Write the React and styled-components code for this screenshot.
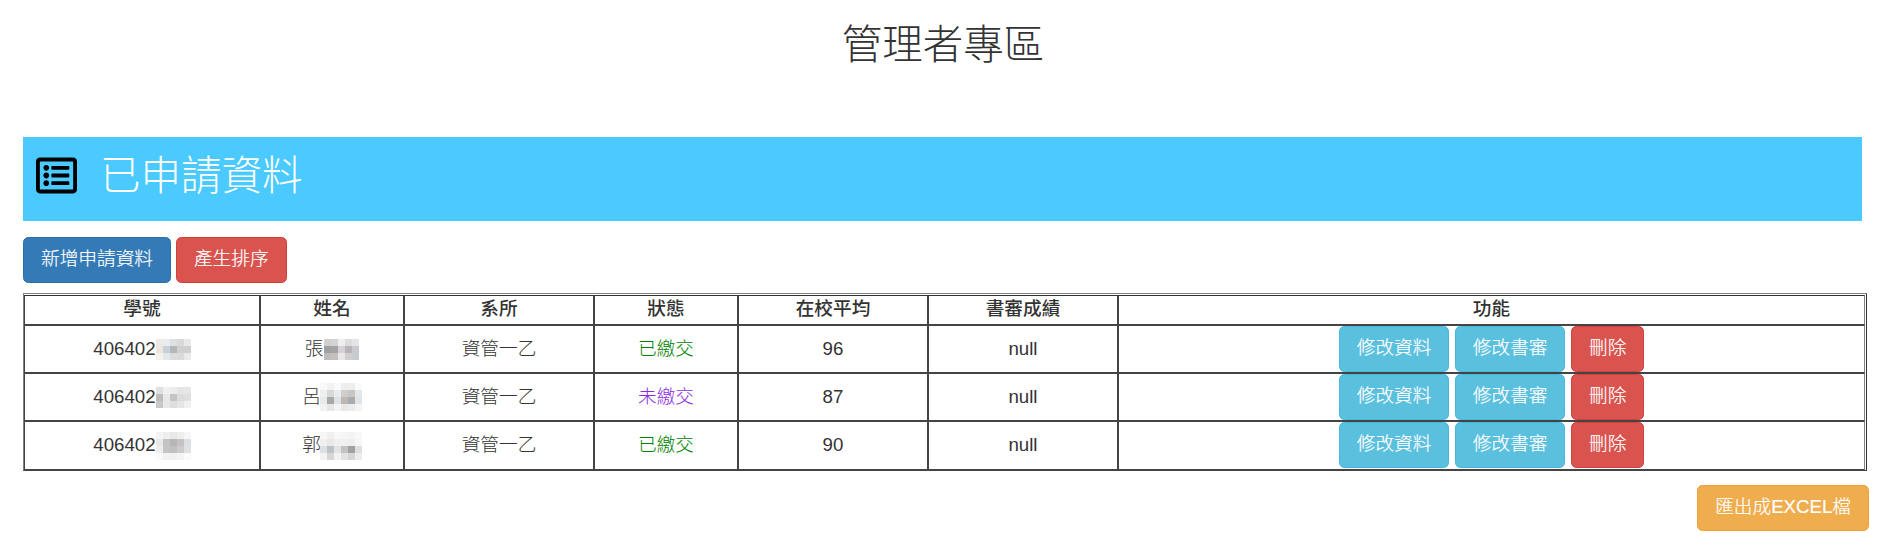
import React from 'react';
import styled, { createGlobalStyle } from 'styled-components';
import { FaRegListAlt } from 'react-icons/fa';

const GlobalStyle = createGlobalStyle`
html, body {
    margin: 0;
    padding: 0;
    background: #fff;
}
body {
    font-family: "Liberation Sans", "Noto Sans CJK TC", sans-serif;
    font-size: 18.67px;
    color: #333;
}
`

const Page = styled.div`
    width: 1886px;
    height: 547px;
    overflow: hidden;
    box-sizing: border-box;
    padding: 0 23px;
`

const Title = styled.h2`
    margin: 0 0 30px;
    height: 107px;
    padding-top: 23px;
    box-sizing: border-box;
    text-align: center;
    font-size: 40.5px;
    line-height: 44px;
    font-weight: 300;
    color: #333;
`

const Banner = styled.div`
    display: flex;
    align-items: center;
    gap: 23px;
    width: 1839px;
    height: 84px;
    box-sizing: border-box;
    padding: 0 0 7px 13px;
    background-color: #4acaff;
    color: #000;
    svg {
        display: block;
    }
`

const BannerTitle = styled.h1`
    margin: 0;
    font-size: 40.5px;
    line-height: 44px;
    font-weight: 300;
    color: #fff;
`

const Toolbar = styled.div`
    display: flex;
    gap: 5px;
    margin: 16px 0 10px;
`

const variants = {
    primary: ['#337ab7', '#2e6da4'],
    danger: ['#d9534f', '#d43f3a'],
    info: ['#5bc0de', '#46b8da'],
    warning: ['#f0ad4e', '#eea236'],
}

const Button = styled.button`
    box-sizing: border-box;
    height: 46px;
    padding: 0 17px 2px;
    font-family: inherit;
    font-size: 18.67px;
    line-height: 28px;
    font-weight: 300;
    -webkit-text-stroke: 0.2px #fff;
    white-space: nowrap;
    color: #fff;
    cursor: pointer;
    border-radius: 5.33px;
    border: 1px solid ${({ $variant }) => variants[$variant][1]};
    background-color: ${({ $variant }) => variants[$variant][0]};
`

// outer frame is a light line, a white gap, then the dark cell lines
const Table = styled.table`
    width: 1843px;
    table-layout: fixed;
    border-collapse: separate;
    border-spacing: 0;
    box-sizing: border-box;
    padding: 1px 1px 0 0;
    border-style: solid;
    border-width: 1px;
    border-color: #808080 #333 #444 #808080;
    font-size: 18.67px;
`

const HeadCell = styled.th`
    padding: 0 0 2px;
    height: 25.5px;
    text-align: center;
    font-size: 18.67px;
    line-height: 26px;
    font-weight: 500;
    border-top: 1px solid #333;
    border-left: 2px solid #444;
    &:first-child {
        border-left: 1px solid #444;
    }
    &:last-child {
        border-right: 1px solid #808080;
    }
`

const Cell = styled.td`
    padding: 0;
    height: 46.2px;
    text-align: center;
    font-weight: 300;
    line-height: 26px;
    color: ${({ $color }) => $color || '#333'};
    border-top: 2px solid #444;
    border-left: 2px solid #444;
    &:first-child {
        border-left: 1px solid #444;
    }
    &:last-child {
        border-right: 1px solid #808080;
    }
    tr:last-child & {
        border-bottom: 1px solid #444;
    }
`

const ActionRow = styled.div`
    display: flex;
    justify-content: center;
    gap: 5.5px;
`

const Footer = styled.div`
    display: flex;
    justify-content: flex-end;
    margin: 14px -6px 0 0;
`

const MosaicSvg = styled.svg`
    display: inline-block;
    vertical-align: middle;
    margin: -8px 0 -6px ${({ $gap }) => $gap}px;
`

// redacted part of the name / student id, drawn as the mosaic in the screenshot
const Mosaic = ({ rows, gap = 0, cell = 7 }) => (
    <MosaicSvg
        $gap={gap}
        width={rows[0].length * cell}
        height={rows.length * cell}
        shapeRendering="crispEdges"
    >
        {rows.map((row, y) =>
            row.map((fill, x) => (
                <rect key={`${x}-${y}`} x={x * cell} y={y * cell} width={cell} height={cell} fill={fill} />
            ))
        )}
    </MosaicSvg>
)

const students = [
    {
        id: [
            ['#efe9e4', '#e9ecef', '#dde0e2', '#d9d9d9', '#e9e9e9'],
            ['#ebe6e0', '#c8d0d6', '#b4b6b8', '#cfcfcf', '#cdd0d2'],
            ['#f5f2ee', '#e4e8eb', '#dcdcdc', '#dadada', '#eaeaea'],
        ],
        surname: '張',
        nameGap: 1,
        name: [
            ['#d0d0d0', '#d4d2d2', '#eeeef0', '#dcdcdc', '#e3e5e7'],
            ['#a0a0a2', '#a4a4a4', '#d4d2d4', '#b8b4b8', '#c8ccd0'],
            ['#c0bcbc', '#c4c0c0', '#e8e6ea', '#d0cece', '#c8ccd0'],
        ],
        status: '已繳交',
        color: 'green',
        score: 96,
    },
    {
        id: [
            ['#e0e0e0', '#f0f0f0', '#ededed', '#e4e4e4', '#e6e6e6'],
            ['#bdbdbd', '#e8e8e8', '#c4c6c6', '#dcdcdc', '#dddfe0'],
            ['#c8c8c8', '#e8e8e8', '#dedede', '#e6e6e6', '#eef0f2'],
        ],
        surname: '呂',
        nameGap: -1,
        name: [
            ['#f8f8f8', '#f2f2f2', '#fafafa', '#eeeeee', '#eeeeee', '#fafafa'],
            ['#eef0f0', '#d8d8d8', '#e8ecee', '#d0cecc', '#c8c6c4', '#e4e8ea'],
            ['#e8eaea', '#a8a8aa', '#dce2e6', '#bcb8b4', '#a8acae', '#e0e4e6'],
            ['#f2f2f2', '#e6e6e6', '#f4f4f6', '#e8e8e8', '#ececec', '#f4f4f6'],
        ],
        status: '未繳交',
        color: '#8a2be2',
        score: 87,
    },
    {
        id: [
            ['#f4f4f4', '#eeeeee', '#e8e8e8', '#eeeeee', '#f6f6f6'],
            ['#e8e8e8', '#c4c4c4', '#b8b6b6', '#c4c2c2', '#dce0e4'],
            ['#eeeeee', '#c4c4c4', '#c0c0c0', '#cccccc', '#dee2e6'],
            ['#fafafa', '#f2f2f2', '#f0f0f0', '#f4f4f4', '#fbfbfb'],
        ],
        surname: '郭',
        nameGap: -1,
        name: [
            ['#f6f6f6', '#f0f0f0', '#f8f8f8', '#f6f6f6', '#f4f4f4', '#f8f8f8'],
            ['#f0f0f0', '#e8e8e8', '#f0f0f0', '#f0f0f0', '#eceef0', '#f6f6f6'],
            ['#dae0e4', '#bec2c4', '#e0e4e6', '#c6c2c0', '#a2a2a2', '#dadfe2'],
            ['#f2f2f2', '#d6d6d6', '#f2f2f2', '#e2e2e2', '#d6d6d6', '#ececec'],
        ],
        status: '已繳交',
        color: 'green',
        score: 90,
    },
]

const columns = [
    ['學號', 235],
    ['姓名', 144],
    ['系所', 190],
    ['狀態', 144],
    ['在校平均', 190],
    ['書審成績', 190],
    ['功能', 748],
]

const App = () => (
    <Page>
        <GlobalStyle />
        <Title>管理者專區</Title>
        <Banner>
            <FaRegListAlt size={41} />
            <BannerTitle>已申請資料</BannerTitle>
        </Banner>
        <Toolbar>
            <Button $variant="primary">新增申請資料</Button>
            <Button $variant="danger">產生排序</Button>
        </Toolbar>
        <Table>
            <colgroup>
                {columns.map(([label, width]) => (
                    <col key={label} width={width} />
                ))}
            </colgroup>
            <thead>
                <tr>
                    {columns.map(([label]) => (
                        <HeadCell key={label}>{label}</HeadCell>
                    ))}
                </tr>
            </thead>
            <tbody>
                {students.map((s) => (
                    <tr key={s.surname}>
                        <Cell>406402<Mosaic rows={s.id} /></Cell>
                        <Cell>{s.surname}<Mosaic rows={s.name} gap={s.nameGap} /></Cell>
                        <Cell>資管一乙</Cell>
                        <Cell $color={s.color}>{s.status}</Cell>
                        <Cell>{s.score}</Cell>
                        <Cell>null</Cell>
                        <Cell>
                            <ActionRow>
                                <Button $variant="info">修改資料</Button>
                                <Button $variant="info">修改書審</Button>
                                <Button $variant="danger">刪除</Button>
                            </ActionRow>
                        </Cell>
                    </tr>
                ))}
            </tbody>
        </Table>
        <Footer>
            <Button $variant="warning">匯出成EXCEL檔</Button>
        </Footer>
    </Page>
)

export default App;
